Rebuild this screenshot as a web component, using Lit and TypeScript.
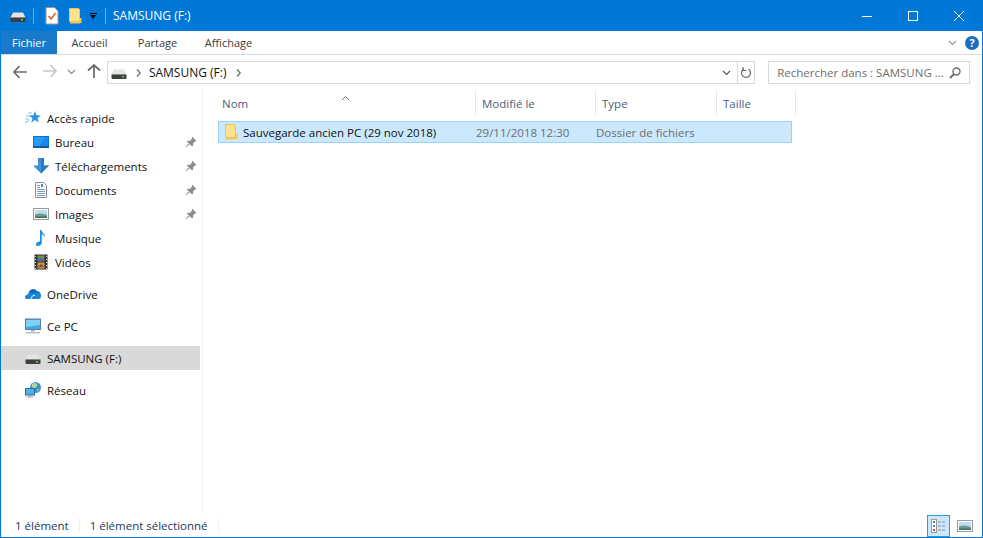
import { LitElement, css, html, svg } from 'lit';
import { customElement } from 'lit/decorators.js';

const drive = svg`<svg class="icon" width="16" height="16" viewBox="0 0 16 16">
  <path d="M3 4.5h10l2.5 5h-15z" fill="#e4e4e4"/><rect x="0.5" y="9" width="15" height="5" rx="1" fill="#3f3f3f"/>
  <rect x="1" y="9" width="14" height="1" fill="#8a8a8a"/><rect x="11" y="11" width="2" height="1.5" fill="#4fd24f"/></svg>`;

const folder = svg`<svg class="icon" width="16" height="18" viewBox="0 0 16 18">
  <path d="M2.5 1.5h9l1 1v12h-10z" fill="#ffe28c" stroke="#e8c35e"/><rect x="12" y="11" width="2.5" height="5" fill="#f2c94f"/><rect x="3" y="15" width="10" height="1.5" fill="#f2c94f"/></svg>`;

const pin = svg`<svg width="12" height="12" viewBox="0 0 12 12">
  <path d="M7 0.5l4.5 4.5-1.5.5-2 2 .2 2-1 1L1.8 5.800l1-1 2 .2 2-2z" fill="#8d8d8d"/><path d="M3.500 8L.8 11.200 4 8.500z" fill="#8d8d8d" stroke="#8d8d8d" stroke-width=".6"/></svg>`;

const star = svg`<svg class="icon" width="16" height="16" viewBox="0 0 16 16">
  <path d="M10 1l1.500 4.200 4.500.2-3.500 2.800 1.200 4.300L10 10l-3.700 2.500 1.200-4.300L4 5.400l4.500-.2z" fill="#2f8fe0"/>
  <path d="M1 6h4M.5 9h4M0 12.500l4-2M3 3h4" stroke="#7fbdf0" stroke-width="1"/></svg>`;

const desktop = svg`<svg class="icon" width="16" height="16" viewBox="0 0 16 16">
  <rect x="0" y="2" width="16" height="12" fill="#0078d7"/><rect x="1" y="3" width="14" height="9" fill="#2a9bf0"/>
  <path d="M6 12l6-9h3v9z" fill="#1a8ae6"/><rect x="0" y="12" width="16" height="2" fill="#0a5fa8"/></svg>`;

const download = svg`<svg class="icon" width="16" height="16" viewBox="0 0 16 16">
  <path d="M5 0h6v7.500h5L8 15.500 0 7.500h5z" fill="#3f8fdd"/><path d="M8 0h3v7.500h5L8 15.500z" fill="#2f78c4"/></svg>`;

const documents = svg`<svg class="icon" width="16" height="16" viewBox="0 0 16 16">
  <path d="M2.500 .5h8l3 3v12h-11z" fill="#fff" stroke="#8b8b8b"/>
  <path d="M4 3.500h3M4 5.500h3M4 7.500h8M4 9.500h8M4 11.500h8M4 13.500h8" stroke="#7d9cb8"/><rect x="8" y="2" width="2" height="3" fill="#3f8fdd"/></svg>`;

const images = svg`<svg class="icon" width="16" height="16" viewBox="0 0 16 16">
  <rect x=".5" y="2.500" width="15" height="11" fill="#fff" stroke="#9a9a9a"/><rect x="2" y="4" width="12" height="8" fill="#bcdcf2"/>
  <path d="M2 8.500c3-1.500 6-1.500 12 .5v3H2z" fill="#6f9c8c"/><path d="M2 10.500h12V12H2z" fill="#3f6f66"/></svg>`;

const music = svg`<svg class="icon" width="16" height="16" viewBox="0 0 16 16">
  <path d="M7 0h1.500c.2 3 4 3.500 3.500 7.500-.5-2-2-3-3.200-3.200V12.500c0 2-2 3.500-4 3.500S2.500 14.500 3.500 13c.7-1.200 2-1.600 3.500-1.200z" fill="#1e8fe6"/></svg>`;

const videos = svg`<svg class="icon" width="16" height="16" viewBox="0 0 16 16">
  <rect x="1.500" y="0.500" width="13" height="15" fill="#333"/><rect x="4.500" y="1.500" width="7" height="6" fill="#6f8f4f"/>
  <rect x="4.500" y="8.500" width="7" height="6" fill="#c99a3f"/><path d="M5 6l2-3 2 2 2-1v3H5z" fill="#3f6fb0"/><path d="M5 13l3-3 3 3z" fill="#8b3f2f"/>
  <path d="M2.500 2v1M2.500 5v1M2.500 8v1M2.500 11v1M2.500 14v1M13.500 2v1M13.500 5v1M13.500 8v1M13.500 11v1M13.500 14v1" stroke="#ddd"/></svg>`;

const onedrive = svg`<svg class="icon" width="16" height="16" viewBox="0 0 16 16">
  <path d="M3.500 7.500C4 4.500 6 3 8.200 3c1.700 0 3 .9 3.800 2.300 1.800-.2 3.200.8 3.500 2.400L10 8.800 6.500 7z" fill="#0f6cbd"/>
  <path d="M1.800 13C.6 13 0 12 0 11c0-1.300 1-2.300 2.400-2.300C3 7.200 4.300 6.500 5.600 7c.8-.4 1.800-.3 2.600.5 1-.7 2-.7 2.900-.2 1-.6 3-.6 4.100.3.700.6.900 1.400.8 2.400 0 1.700-1 3-2 3z" fill="#1a86d8"/>
  <path d="M6 13c.2-2 1.600-3.800 4-3.800" stroke="#fff" fill="none"/></svg>`;

const thisPc = svg`<svg class="icon" width="16" height="16" viewBox="0 0 16 16">
  <rect x=".5" y="1" width="15" height="10.500" fill="#3fa9e8" stroke="#5a7f99"/><path d="M1 2h14v5L1 9z" fill="#7fd0f5"/>
  <rect x="6" y="12" width="4" height="1.500" fill="#a9b6bf"/><rect x="1" y="14" width="14" height="1.500" fill="#b5bdc3"/></svg>`;

const network = svg`<svg class="icon" width="16" height="16" viewBox="0 0 16 16">
  <circle cx="10.500" cy="5.500" r="5.500" fill="#3f8fd0"/><path d="M7 2c2-1.500 3.500-1 5 0 1 2-1 4-3 4s-3-2-2-4z" fill="#a9d8a0"/><path d="M12 7c1 0 2 0 2.500 1L12 10z" fill="#8fc48a"/>
  <rect x=".5" y="6.500" width="9" height="6.500" fill="#4fb0ea" stroke="#2b6f9e"/><rect x="3.500" y="13" width="3" height="1.500" fill="#8aa"/><rect x="1.500" y="14.500" width="7" height="1" fill="#9aa"/></svg>`;

const taskDoc = svg`<svg class="icon" width="14" height="18" viewBox="0 0 14 18">
  <path d="M1 .5h8.500l3.500 3.500v13H1z" fill="#fff" stroke="#9a9a9a"/><path d="M3.500 9l2.500 3 4.500-6" stroke="#e8602c" stroke-width="1.500" fill="none"/></svg>`;

const chevronDown = svg`<svg width="9" height="6" viewBox="0 0 9 6"><path d="M1 1l3.500 3.500L8 1" stroke="currentColor" stroke-width="1.200" fill="none"/></svg>`;
const chevronRight = svg`<svg width="5" height="8" viewBox="0 0 5 8"><path d="M1 .5L4.200 4 1 7.500" stroke="#6d6d6d" stroke-width="1.300" fill="none"/></svg>`;

const arrowLeft = (color: string) => svg`<svg width="14" height="14" viewBox="0 0 14 14"><path d="M6.500 1L1 7l5.500 6M1.500 7H14" stroke="${color}" stroke-width="1.700" fill="none"/></svg>`;
const arrowRight = (color: string) => svg`<svg width="14" height="14" viewBox="0 0 14 14"><path d="M7.500 1L13 7l-5.500 6M12.500 7H0" stroke="${color}" stroke-width="1.700" fill="none"/></svg>`;
const arrowUp = svg`<svg width="14" height="14" viewBox="0 0 14 14"><path d="M1 6.500L7 1l6 5.500M7 1.500V14" stroke="#6b6b6b" stroke-width="1.700" fill="none"/></svg>`;

const quick = [
  { label: 'Bureau', icon: desktop, pinned: true },
  { label: 'Téléchargements', icon: download, pinned: true },
  { label: 'Documents', icon: documents, pinned: true },
  { label: 'Images', icon: images, pinned: true },
  { label: 'Musique', icon: music, pinned: false },
  { label: 'Vidéos', icon: videos, pinned: false },
];

@customElement('app-root')
export class AppRoot extends LitElement {
  static styles = css`
    :host {
      display: block;
      width: 983px;
      height: 538px;
      font-family: 'Open Sans', 'Noto Sans', sans-serif;
      font-size: 11.5px;
      color: #000;
    }
    * { box-sizing: border-box; }
    .window {
      display: flex;
      flex-direction: column;
      height: 538px;
      background: #fff;
      border: 1px solid #0078d7;
      border-top: 0;
      overflow: hidden;
    }
    .icon { display: block; flex: none; }

    .titlebar {
      display: flex;
      align-items: center;
      height: 31px;
      flex: none;
      background: #0078d7;
      color: #fff;
    }
    .qat { display: flex; align-items: center; padding-left: 9px; }
    .qat .sep { width: 1px; height: 16px; background: #66aee7; margin: 0 11px 0 7px; }
    .qat .sep.last { margin: 0 7px 0 8px; }
    .qat .folder { margin: 0 6px 0 8px; }
    .dropdown { display: flex; flex-direction: column; align-items: center; gap: 1px; width: 8px; }
    .dropdown i { display: block; width: 7px; height: 1px; background: #000; }
    .dropdown b { display: block; border: 3.500px solid transparent; border-top: 4px solid #000; border-bottom: 0; }
    .title { flex: 1; font-size: 12px; }
    .winbtns { display: flex; align-items: center; }
    .winbtn { width: 46px; height: 31px; display: flex; align-items: center; justify-content: center; }

    .tabs {
      display: flex;
      align-items: stretch;
      height: 24px;
      flex: none;
      border-bottom: 1px solid #dadbdc;
    }
    .tab { display: flex; align-items: center; justify-content: center; color: #3b3b3b; font-size: 11px; }
    .tab.file { width: 56px; background: #1979ca; color: #fff; height: 23px; }
    .tab.home { width: 65px; margin-right: 3px; }
    .tab.share { width: 65px; }
    .tab.view { width: 77px; }
    .tabs .fill { flex: 1; }
    .ribbon-ctl { display: flex; align-items: center; gap: 8px; padding-right: 3px; color: #9a9a9a; }
    .help {
      width: 14px; height: 14px; border-radius: 50%;
      background: #1a6fc0; color: #fff; font-size: 11px; font-weight: 700;
      display: flex; align-items: center; justify-content: center;
    }

    .navbar {
      display: flex;
      align-items: center;
      height: 34px;
      flex: none;
      padding: 0 12px 0 0;
    }
    .navbtns { display: flex; align-items: center; width: 106px; padding-left: 12px; }
    .navbtns .forward { margin-left: 16px; }
    .navbtns .recent { margin-left: 10px; color: #8a8a8a; display: flex; }
    .navbtns .up { margin-left: 11px; }
    .address {
      display: flex;
      align-items: center;
      width: 649px;
      height: 23px;
      border: 1px solid #d9d9d9;
      padding-left: 3px;
      margin-top: 1px;
    }
    .address .crumb { margin: 0 10px 0 8px; font-size: 12px; color: #111; }
    .address .fill { flex: 1; }
    .address .drop { width: 22px; display: flex; justify-content: center; color: #5a5a5a; }
    .address .refresh {
      width: 17px; height: 100%;
      border-left: 1px solid #d9d9d9;
      display: flex; align-items: center; justify-content: center;
    }
    .search {
      display: flex;
      align-items: center;
      justify-content: space-between;
      width: 202px;
      height: 23px;
      margin: 1px 0 0 13px;
      border: 1px solid #d9d9d9;
      padding: 0 8px;
      color: #6d6d6d;
      white-space: nowrap;
    }

    .body { flex: 1; display: flex; min-height: 0; }
    .sidebar {
      width: 202px;
      flex: none;
      border-right: 1px solid #f0f0f0;
      padding-top: 17px;
      display: flex;
      flex-direction: column;
      gap: 8px;
    }
    .group { display: flex; flex-direction: column; }
    .nav {
      display: flex;
      align-items: center;
      height: 24px;
      width: 199px;
      padding-left: 24px;
      gap: 6px;
      color: #111;
    }
    .nav.child { padding-left: 32px; }
    .nav.current { background: #d9d9d9; }
    .nav .label { flex: 1; }
    .nav .pin { width: 12px; margin-right: 3px; display: flex; }

    .content { flex: 1; min-width: 0; padding-top: 2px; position: relative; }
    .columns { display: flex; height: 24px; padding-left: 14px; }
    .col {
      display: flex;
      align-items: center;
      padding-left: 5px;
      border-right: 1px solid #e5e5e5;
      color: #4c607a;
    }
    .col.name { width: 259px; }
    .col.date { width: 120px; padding-left: 6px; }
    .col.kind { width: 121px; padding-left: 6px; }
    .col.size { width: 79px; padding-left: 6px; }
    .sort { position: absolute; left: 138px; top: 0; color: #777; }
    .rows { padding: 6px 0 0 15px; }
    .row {
      display: flex;
      align-items: center;
      width: 574px;
      height: 22px;
      background: #cce8ff;
      border: 1px solid #99d1ff;
    }
    .row .cell-name { width: 257px; padding-left: 4px; display: flex; align-items: center; gap: 4px; color: #111; }
    .row .cell-date { width: 120px; color: #6d6d6d; }
    .row .cell-type { color: #6d6d6d; }

    .status {
      display: flex;
      align-items: center;
      height: 23px;
      flex: none;
      padding-left: 14px;
      color: #1e395b;
    }
    .status .sep { width: 1px; height: 15px; background: #f0f0f0; margin: 0 10px; }
    .status .fill { flex: 1; }
    .views { display: flex; align-items: center; padding-right: 6px; gap: 3px; }
    .viewbtn { width: 23px; height: 22px; display: flex; align-items: center; justify-content: center; }
    .viewbtn.on { background: #cce8ff; border: 1px solid #3399d6; }
  `;

  render() {
    return html`
      <div class="window">
        <div class="titlebar">
          <div class="qat">
            ${drive}
            <span class="sep"></span>
            ${taskDoc}
            <span class="folder">${folder}</span>
            <span class="dropdown"><i></i><b></b></span>
            <span class="sep last"></span>
          </div>
          <div class="title">SAMSUNG (F:)</div>
          <div class="winbtns">
            <div class="winbtn"><svg width="10" height="10" viewBox="0 0 10 10"><path d="M0 5.500h10" stroke="#fff"/></svg></div>
            <div class="winbtn"><svg width="10" height="10" viewBox="0 0 10 10"><rect x=".5" y=".5" width="9" height="9" fill="none" stroke="#fff"/></svg></div>
            <div class="winbtn"><svg width="10" height="10" viewBox="0 0 10 10"><path d="M0 0l10 10M10 0L0 10" stroke="#fff"/></svg></div>
          </div>
        </div>

        <div class="tabs">
          <div class="tab file">Fichier</div>
          <div class="tab home">Accueil</div>
          <div class="tab share">Partage</div>
          <div class="tab view">Affichage</div>
          <div class="fill"></div>
          <div class="ribbon-ctl">${chevronDown}<div class="help">?</div></div>
        </div>

        <div class="navbar">
          <div class="navbtns">
            ${arrowLeft('#6b6b6b')}
            <span class="forward">${arrowRight('#c8c8c8')}</span>
            <span class="recent">${chevronDown}</span>
            <span class="up">${arrowUp}</span>
          </div>
          <div class="address">
            ${drive}
            <span style="margin-left:9px">${chevronRight}</span>
            <span class="crumb">SAMSUNG (F:)</span>
            ${chevronRight}
            <span class="fill"></span>
            <span class="drop">${chevronDown}</span>
            <span class="refresh">
              <svg width="12" height="12" viewBox="0 0 12 12"><path d="M3.500 2.200A4.500 4.500 0 1 0 8.500 2.200" stroke="#6b6b6b" stroke-width="1.300" fill="none"/><path d="M3 0v3.500h3.500" stroke="#6b6b6b" stroke-width="1.200" fill="none"/></svg>
            </span>
          </div>
          <div class="search">
            <span>Rechercher dans : SAMSUNG ...</span>
            <svg width="12" height="12" viewBox="0 0 12 12"><circle cx="7.500" cy="4.500" r="3.500" stroke="#6b6b6b" stroke-width="1.400" fill="none"/><path d="M5 7l-4 4" stroke="#6b6b6b" stroke-width="2"/></svg>
          </div>
        </div>

        <div class="body">
          <div class="sidebar">
            <div class="group">
              <div class="nav">${star}<span class="label">Accès rapide</span></div>
              ${quick.map((item) => html`
                <div class="nav child">
                  ${item.icon}
                  <span class="label">${item.label}</span>
                  ${item.pinned ? html`<span class="pin">${pin}</span>` : ''}
                </div>
              `)}
            </div>
            <div class="nav">${onedrive}<span class="label">OneDrive</span></div>
            <div class="nav">${thisPc}<span class="label">Ce PC</span></div>
            <div class="nav current">${drive}<span class="label">SAMSUNG (F:)</span></div>
            <div class="nav">${network}<span class="label">Réseau</span></div>
          </div>

          <div class="content">
            <span class="sort"><svg width="9" height="6" viewBox="0 0 9 6"><path d="M1 5l3.500-3.500L8 5" stroke="currentColor" fill="none"/></svg></span>
            <div class="columns">
              <div class="col name">Nom</div>
              <div class="col date">Modifié le</div>
              <div class="col kind">Type</div>
              <div class="col size">Taille</div>
            </div>
            <div class="rows">
              <div class="row">
                <div class="cell-name">${folder}<span>Sauvegarde ancien PC (29 nov 2018)</span></div>
                <div class="cell-date">29/11/2018 12:30</div>
                <div class="cell-type">Dossier de fichiers</div>
              </div>
            </div>
          </div>
        </div>

        <div class="status">
          <span>1 élément</span>
          <span class="sep"></span>
          <span>1 élément sélectionné</span>
          <span class="sep"></span>
          <span class="fill"></span>
          <div class="views">
            <div class="viewbtn on">
              <svg width="15" height="14" viewBox="0 0 15 14">
                <rect x=".5" y=".5" width="5" height="13" fill="#fff" stroke="#9a9a9a"/>
                <rect x="2" y="2" width="2" height="2" fill="#8a6d3b"/><rect x="2" y="6" width="2" height="2" fill="#3f8fdd"/><rect x="2" y="10" width="2" height="2" fill="#d04040"/>
                <path d="M7 3h3M11 3h3M7 7h3M11 7h3M7 11h3M11 11h3" stroke="#8a8a8a"/>
              </svg>
            </div>
            <div class="viewbtn">${images}</div>
          </div>
        </div>
      </div>
    `;
  }
}
